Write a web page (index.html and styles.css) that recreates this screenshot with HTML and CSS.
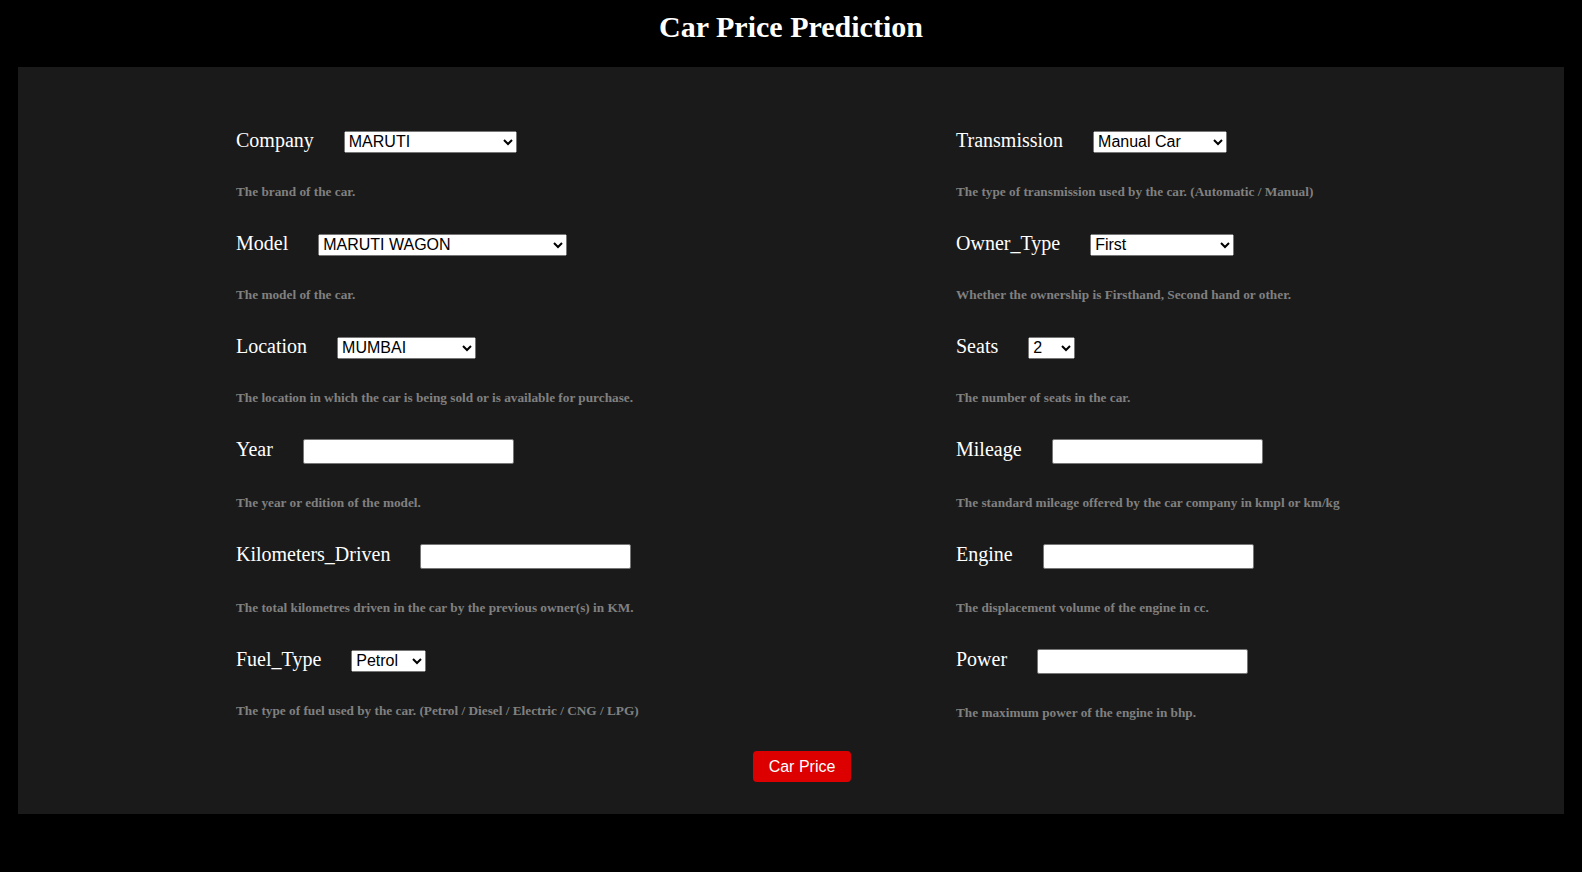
FILE: index.html
```html
<!DOCTYPE html>
<html lang="en">
<head>
<meta charset="utf-8">
<title>Car Price Prediction</title>
<link rel="stylesheet" href="styles.css">
</head>
<body>
<h1 class="title">Car Price Prediction</h1>
<form class="panel">
  <div class="columns">
    <div class="col">
      <div class="field">
        <div class="row">
          <label class="label" for="company">Company</label>
          <select id="company" class="select sel-company">
            <option>MARUTI</option>
            <option>HYUNDAI</option>
            <option>MAHINDRA</option>
          </select>
        </div>
        <p class="desc">The brand of the car.</p>
      </div>
      <div class="field">
        <div class="row">
          <label class="label" for="model">Model</label>
          <select id="model" class="select sel-model">
            <option>MARUTI WAGON</option>
            <option>MARUTI SWIFT</option>
          </select>
        </div>
        <p class="desc">The model of the car.</p>
      </div>
      <div class="field">
        <div class="row">
          <label class="label" for="location">Location</label>
          <select id="location" class="select sel-location">
            <option>MUMBAI</option>
            <option>PUNE</option>
            <option>CHENNAI</option>
          </select>
        </div>
        <p class="desc">The location in which the car is being sold or is available for purchase.</p>
      </div>
      <div class="field">
        <div class="row">
          <label class="label" for="year">Year</label>
          <input id="year" class="input" type="text">
        </div>
        <p class="desc">The year or edition of the model.</p>
      </div>
      <div class="field">
        <div class="row">
          <label class="label" for="km">Kilometers_Driven</label>
          <input id="km" class="input" type="text">
        </div>
        <p class="desc">The total kilometres driven in the car by the previous owner(s) in KM.</p>
      </div>
      <div class="field">
        <div class="row">
          <label class="label" for="fuel">Fuel_Type</label>
          <select id="fuel" class="select sel-fuel">
            <option>Petrol</option>
            <option>Diesel</option>
            <option>CNG</option>
            <option>LPG</option>
          </select>
        </div>
        <p class="desc">The type of fuel used by the car. (Petrol / Diesel / Electric / CNG / LPG)</p>
      </div>
    </div>
    <div class="col">
      <div class="field">
        <div class="row">
          <label class="label" for="transmission">Transmission</label>
          <select id="transmission" class="select sel-transmission">
            <option>Manual Car</option>
            <option>Automatic Car</option>
          </select>
        </div>
        <p class="desc">The type of transmission used by the car. (Automatic / Manual)</p>
      </div>
      <div class="field">
        <div class="row">
          <label class="label" for="owner">Owner_Type</label>
          <select id="owner" class="select sel-owner">
            <option>First</option>
            <option>Second</option>
            <option>Third</option>
          </select>
        </div>
        <p class="desc">Whether the ownership is Firsthand, Second hand or other.</p>
      </div>
      <div class="field">
        <div class="row">
          <label class="label" for="seats">Seats</label>
          <select id="seats" class="select sel-seats">
            <option>2</option>
            <option>4</option>
            <option>5</option>
          </select>
        </div>
        <p class="desc">The number of seats in the car.</p>
      </div>
      <div class="field">
        <div class="row">
          <label class="label" for="mileage">Mileage</label>
          <input id="mileage" class="input" type="text">
        </div>
        <p class="desc">The standard mileage offered by the car company in kmpl or km/kg</p>
      </div>
      <div class="field">
        <div class="row">
          <label class="label" for="engine">Engine</label>
          <input id="engine" class="input" type="text">
        </div>
        <p class="desc">The displacement volume of the engine in cc.</p>
      </div>
      <div class="field">
        <div class="row">
          <label class="label" for="power">Power</label>
          <input id="power" class="input" type="text">
        </div>
        <p class="desc">The maximum power of the engine in bhp.</p>
      </div>
    </div>
  </div>
  <div class="actions">
    <button type="button" class="btn">Car Price</button>
  </div>
</form>
</body>
</html>
```

FILE: styles.css
```css
body {
  margin: 8px;
  background: #000;
  font-family: "Liberation Serif", "Times New Roman", serif;
}

.title {
  margin: 0 0 22px;
  font-size: 30px;
  line-height: 37px;
  font-weight: bold;
  text-align: center;
  color: #fff;
}

.panel {
  margin: 0 10px;
  background: #1a1a1a;
  padding: 62px 0 32px;
}

.columns {
  display: grid;
  grid-template-columns: 720px 1fr;
  padding-left: 218px;
  align-items: start;
}

.row {
  display: flex;
  align-items: baseline;
}

.label {
  font-size: 20px;
  line-height: 23px;
  color: #fff;
  margin-right: 30px;
}

.desc {
  margin: 31px 0 32.5px;
  font-size: 13.28px;
  line-height: 16px;
  font-weight: bold;
  color: #808080;
}

.field:last-child .desc {
  margin-bottom: 0;
}

.select {
  height: 22px;
  font-family: "Liberation Sans", Arial, sans-serif;
  font-size: 16px;
  box-sizing: border-box;
}

.sel-company { width: 173px; }
.sel-model { width: 249px; }
.sel-location { width: 139px; }
.sel-fuel { width: 75px; }
.sel-transmission { width: 134px; }
.sel-owner { width: 144px; }
.sel-seats { width: 47px; }

.input {
  width: 211px;
  height: 25px;
  box-sizing: border-box;
  border: 1px solid #767676;
  border-radius: 2px;
  background: #fff;
  padding: 1px 2px;
  font-family: "Liberation Sans", Arial, sans-serif;
  font-size: 16px;
}

.actions {
  display: flex;
  justify-content: center;
  padding-left: 22px;
  margin-top: 30px;
}

.btn {
  background: #dd0000;
  color: #fff;
  border: none;
  border-radius: 4px;
  padding: 6px 16px;
  line-height: 19px;
  font-family: "Liberation Sans", Arial, sans-serif;
  font-size: 16px;
  cursor: pointer;
}
```
